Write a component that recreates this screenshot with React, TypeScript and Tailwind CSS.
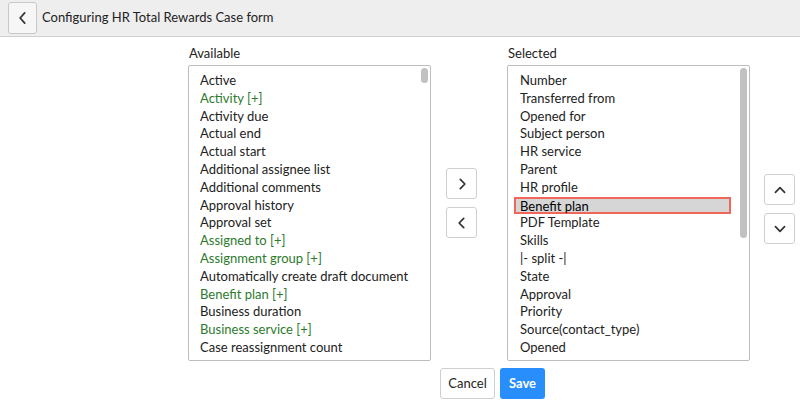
import React from "react";

const avail: [string, boolean][] = [
  ["Active", false], ["Activity [+]", true], ["Activity due", false], ["Actual end", false],
  ["Actual start", false], ["Additional assignee list", false], ["Additional comments", false],
  ["Approval history", false], ["Approval set", false], ["Assigned to [+]", true],
  ["Assignment group [+]", true], ["Automatically create draft document", false],
  ["Benefit plan [+]", true], ["Business duration", false], ["Business service [+]", true],
  ["Case reassignment count", false], ["Category", false],
];
const sel = ["Number", "Transferred from", "Opened for", "Subject person", "HR service", "Parent", "HR profile", "Benefit plan", "PDF Template", "Skills", "|- split -|", "State", "Approval", "Priority", "Source(contact_type)", "Opened", "Opened by"];

const Chev = ({ d }: { d: string }) => (
  <svg width="16" height="16" viewBox="0 0 14 14" fill="none" stroke="#333" strokeWidth="1.5" strokeLinecap="round" strokeLinejoin="round"><path d={d} /></svg>
);
const Btn = ({ d }: { d: string }) => (
  <div className="w-[31px] h-[31px] border border-[#cfcfcf] rounded-[3px] bg-white flex items-center justify-center"><Chev d={d} /></div>
);

export default function App() {
  return (
    <div className="w-[800px] h-[400px] bg-white overflow-hidden text-[13px] text-[#222]" style={{ fontFamily: "Lato, 'Open Sans', sans-serif" }}>
      <div className="h-[37px] bg-[#eeeeee] border-b border-[#cfcfcf] flex items-center pl-[8px]">
        <div className="w-[29px] h-[32px] border border-[#c8c8c8] rounded-[3px] bg-[#f6f6f6] flex items-center justify-center"><Chev d="M8.5 2.5 L4.5 7 L8.5 11.5" /></div>
        <span className="ml-[5px]">Configuring HR Total Rewards Case form</span>
      </div>
      <div className="flex pl-[188px] pt-[6px]">
        <div className="w-[243px]">
          <div className="h-[22px] flex items-center pl-[1px]">Available</div>
          <div className="h-[296px] border border-[#bdbdbd] rounded-[2px] relative overflow-hidden pt-[6px] pl-[11px]">
            {avail.map(([t, g]) => <div key={t} className={"h-[17.8px] leading-[17.8px] " + (g ? "text-[#2d7a2d]" : "")}>{t}</div>)}
            <div className="absolute right-[2px] top-[2px] w-[7px] h-[15px] rounded bg-[#c1c1c1]" />
          </div>
        </div>
        <div className="w-[76px] flex flex-col items-start pl-[15px] pt-[125px] gap-[8px]">
          <Btn d="M5.5 3 L9.5 7 L5.5 11" />
          <Btn d="M8.5 3 L4.5 7 L8.5 11" />
        </div>
        <div className="w-[243px]">
          <div className="h-[22px] flex items-center pl-[1px]">Selected</div>
          <div className="h-[296px] border border-[#bdbdbd] rounded-[2px] relative overflow-hidden pt-[6px] pl-[6px]">
            {sel.map(t => t === "Benefit plan" ?
              <div key={t} className="h-[17.8px] leading-[14px] w-[217px] bg-[#d6d6d6] border-2 border-[#f0675a] pl-[4px] text-black">{t}</div> :
              <div key={t} className="h-[17.8px] leading-[17.8px] pl-[6px]">{t}</div>)}
            <div className="absolute right-[2px] top-[2px] w-[7px] h-[170px] rounded bg-[#c1c1c1]" />
          </div>
        </div>
        <div className="pl-[14px] pt-[131px] flex flex-col gap-[8px]">
          <Btn d="M3 9 L7 5 L11 9" />
          <Btn d="M3 5 L7 9 L11 5" />
        </div>
      </div>
      <div className="flex pl-[440px] pt-[7px] gap-[5px]">
        <div className="w-[55px] h-[31px] border border-[#cfcfcf] rounded-[3px] flex items-center justify-center">Cancel</div>
        <div className="w-[45px] h-[31px] rounded-[3px] bg-[#278efc] text-white font-bold flex items-center justify-center">Save</div>
      </div>
    </div>
  );
}
